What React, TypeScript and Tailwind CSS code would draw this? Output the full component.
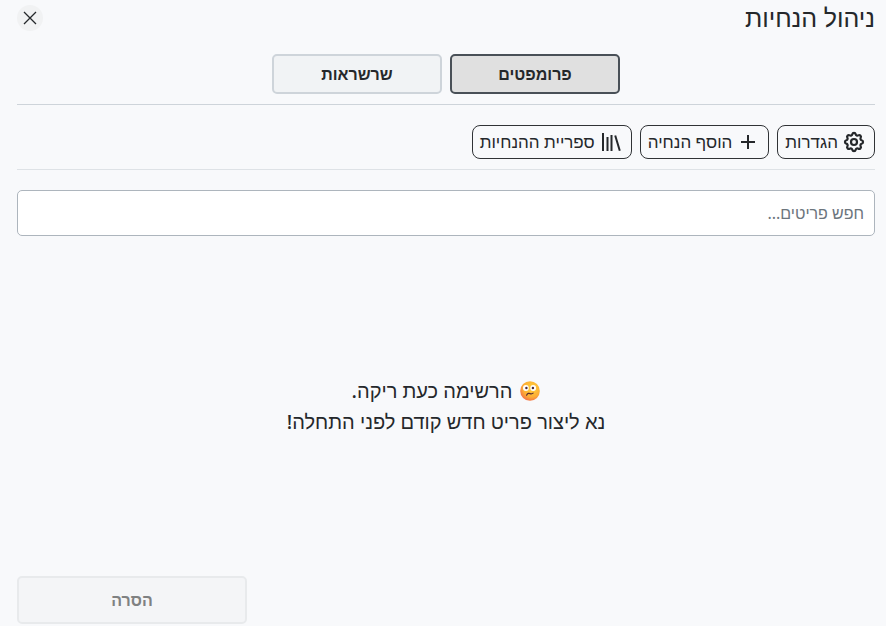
import { useState } from "react";
import { clsx } from "clsx";

const TABS = [
  { id: "prompts", label: "פרומפטים" },
  { id: "chains", label: "שרשראות" },
];

function CloseIcon() {
  return (
    <svg viewBox="0 0 14 14" className="size-3.5" fill="none" stroke="currentColor" strokeWidth="1.3" aria-hidden="true">
      <path d="M1 1l12 12M13 1L1 13" />
    </svg>
  );
}

function GearIcon() {
  return (
    <svg viewBox="0 0 24 24" className="size-6" fill="none" stroke="currentColor" strokeWidth="2.2" strokeLinejoin="round" aria-hidden="true">
      <path d="M10.3 4.3c.4-1.8 3-1.8 3.4 0a1.7 1.7 0 0 0 2.6 1.1c1.5-1 3.3.8 2.4 2.4a1.7 1.7 0 0 0 1 2.5c1.8.4 1.8 3 0 3.4a1.7 1.7 0 0 0-1 2.6c.9 1.5-.9 3.3-2.4 2.4a1.7 1.7 0 0 0-2.6 1c-.4 1.8-3 1.8-3.4 0a1.7 1.7 0 0 0-2.5-1c-1.6.9-3.4-.9-2.4-2.4a1.7 1.7 0 0 0-1.1-2.6c-1.8-.4-1.8-3 0-3.4a1.7 1.7 0 0 0 1.1-2.5c-1-1.6.8-3.4 2.4-2.4a1.7 1.7 0 0 0 2.5-1.1z" />
      <circle cx="12" cy="12" r="3" />
    </svg>
  );
}

function PlusIcon() {
  return (
    <svg viewBox="0 0 24 24" className="size-6" fill="none" stroke="currentColor" strokeWidth="2" aria-hidden="true">
      <path d="M12 5v14M5 12h14" />
    </svg>
  );
}

function LibraryIcon() {
  return (
    <svg viewBox="0 0 24 24" className="size-6" fill="none" stroke="currentColor" strokeWidth="2" aria-hidden="true">
      <path d="M4 3v18M8.5 7v14M12.5 5v16M16.2 5.5L20.8 20.8" />
    </svg>
  );
}

function WorriedFace() {
  return (
    <svg viewBox="0 0 20 20" className="size-5" role="img" aria-label="פרצוף מודאג">
      <defs>
        <radialGradient id="face" cx="0.6" cy="0.35" r="0.75">
          <stop offset="0" stopColor="#ffd23b" />
          <stop offset="0.6" stopColor="#fdae35" />
          <stop offset="1" stopColor="#f0604c" />
        </radialGradient>
      </defs>
      <circle cx="10" cy="10" r="9.8" fill="url(#face)" />
      <circle cx="5.9" cy="7" r="2.9" fill="#fff" />
      <circle cx="13.2" cy="7" r="2.9" fill="#fff" />
      <circle cx="6.4" cy="7" r="1.2" fill="#4a2b3c" />
      <circle cx="12.9" cy="7" r="1.2" fill="#4a2b3c" />
      <path d="M6.6 14.2c.9-2 2.3-2.2 3.6-1.6 1.2.4 2 .2 2.9-.5" fill="none" stroke="#5a2b35" strokeWidth="1.2" strokeLinecap="round" />
    </svg>
  );
}

const toolButton =
  "flex h-[34px] items-center gap-1 rounded-lg border border-[#303336] ps-2 pe-[7px] text-[17px] text-[#25282b] cursor-pointer";

export default function App() {
  const [tab, setTab] = useState("prompts");
  const [query, setQuery] = useState("");

  return (
    <div
      dir="rtl"
      className="flex min-h-screen flex-col bg-[#f8f9fb] ps-[11px] pe-[17px] pb-0.5 font-['Noto_Sans',sans-serif] text-[#25282b]"
    >
      <header className="flex h-9 items-center justify-between">
        <h1 className="text-[25px] font-medium">ניהול הנחיות</h1>
        <button
          type="button"
          aria-label="סגור"
          className="flex size-[26px] cursor-pointer items-center justify-center rounded-full bg-[#f1f2f3]"
        >
          <CloseIcon />
        </button>
      </header>

      {/* Tabs */}
      <nav className="flex justify-center gap-2 border-b border-[#ced4da] pt-[18px] pb-2.5">
        {TABS.map((t) => (
          <button
            key={t.id}
            type="button"
            aria-pressed={tab === t.id}
            onClick={() => setTab(t.id)}
            className={clsx(
              "h-10 w-[170px] cursor-pointer rounded-[5px] border-2 text-base font-bold",
              tab === t.id ? "border-[#495057] bg-[#e0e0e0]" : "border-[#ced4da] bg-[#f1f3f5]"
            )}
          >
            {t.label}
          </button>
        ))}
      </nav>

      {/* Toolbar */}
      <div className="flex gap-2 border-b border-[#dee2e6] pt-5 pb-2.5">
        <button type="button" className={toolButton}>
          <GearIcon />
          הגדרות
        </button>
        <button type="button" className={toolButton}>
          <PlusIcon />
          הוסף הנחיה
        </button>
        <button type="button" className={toolButton}>
          <LibraryIcon />
          ספריית ההנחיות
        </button>
      </div>

      <input
        type="search"
        aria-label="חפש פריטים"
        placeholder="חפש פריטים..."
        value={query}
        onChange={(e) => setQuery(e.target.value)}
        className="mt-5 h-[46px] w-full rounded-[5px] border border-[#adb5bd] bg-white px-2.5 text-base placeholder:text-[#6c757d]"
      />

      {/* Empty state */}
      <main className="flex flex-1 flex-col items-center justify-center text-xl leading-[31px] font-medium">
        <p className="flex items-center gap-2">
          <WorriedFace />
          הרשימה כעת ריקה.
        </p>
        <p>נא ליצור פריט חדש קודם לפני התחלה!</p>
      </main>

      <footer className="flex justify-end">
        <button
          type="button"
          disabled
          className="h-12 w-[230px] rounded-[5px] border-2 border-[#e8eaec] bg-[#f4f5f7] text-base font-bold text-[#7f8182]"
        >
          הסרה
        </button>
      </footer>
    </div>
  );
}
